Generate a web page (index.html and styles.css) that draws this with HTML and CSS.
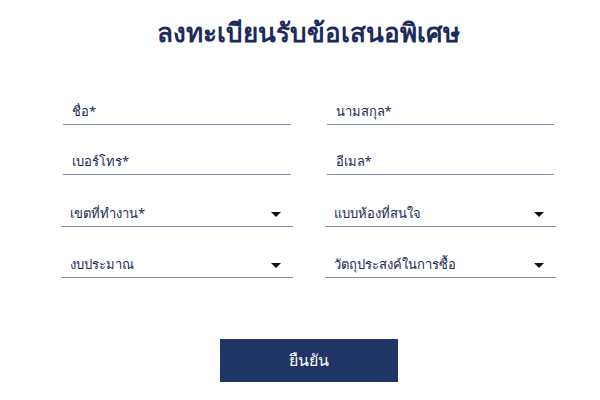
FILE: index.html
```html
<!DOCTYPE html>
<html lang="th">
<head>
<meta charset="utf-8">
<link rel="stylesheet" href="styles.css">
</head>
<body>
<div class="page">
  <h1 class="title">ลงทะเบียนรับข้อเสนอพิเศษ</h1>
  <form class="form">
    <div class="field"><span class="label">ชื่อ*</span></div>
    <div class="field"><span class="label">นามสกุล*</span></div>
    <div class="field"><span class="label">เบอร์โทร*</span></div>
    <div class="field"><span class="label">อีเมล*</span></div>
    <div class="select"><span class="label">เขตที่ทำงาน*</span><span class="arrow"></span></div>
    <div class="select"><span class="label">แบบห้องที่สนใจ</span><span class="arrow"></span></div>
    <div class="select"><span class="label">งบประมาณ</span><span class="arrow"></span></div>
    <div class="select"><span class="label">วัตถุประสงค์ในการซื้อ</span><span class="arrow"></span></div>
  </form>
  <div class="actions"><button class="submit" type="button">ยืนยัน</button></div>
</div>
</body>
</html>
```
FILE: styles.css
```css
html, body { margin: 0; padding: 0; background: #fff; }
body { font-family: "Noto Sans", "Open Sans", sans-serif; color: #1b2a55; }
.page { width: 491px; margin-left: 63px; padding-top: 12px; }
.title { margin: 0; text-align: center; font-size: 26px; font-weight: 600; color: #1a2b5c; line-height: 40px; }
.form { display: grid; grid-template-columns: 1fr 1fr; column-gap: 36px; margin-top: 43px; }
.field { height: 30px; border-bottom: 1px solid #8391aa; display: flex; align-items: flex-end; padding: 0 0 5px 9px; box-sizing: border-box; margin-bottom: 20px; }
.select { height: 32px; margin: 0 -2px 19px -2px; border-bottom: 1px solid #8391aa; display: flex; align-items: flex-end; justify-content: space-between; padding: 0 12px 5px 9px; box-sizing: border-box; }
.label { font-size: 13px; line-height: 16px; color: #1b2a55; }
.arrow { width: 0; height: 0; border-left: 5px solid transparent; border-right: 5px solid transparent; border-top: 5px solid #111; margin-bottom: 4px; }
.actions { display: flex; justify-content: center; margin-top: 42px; }
.submit { width: 178px; height: 43px; background: #1f3566; color: #fff; border: 0; font-family: inherit; font-size: 16px; }
```
